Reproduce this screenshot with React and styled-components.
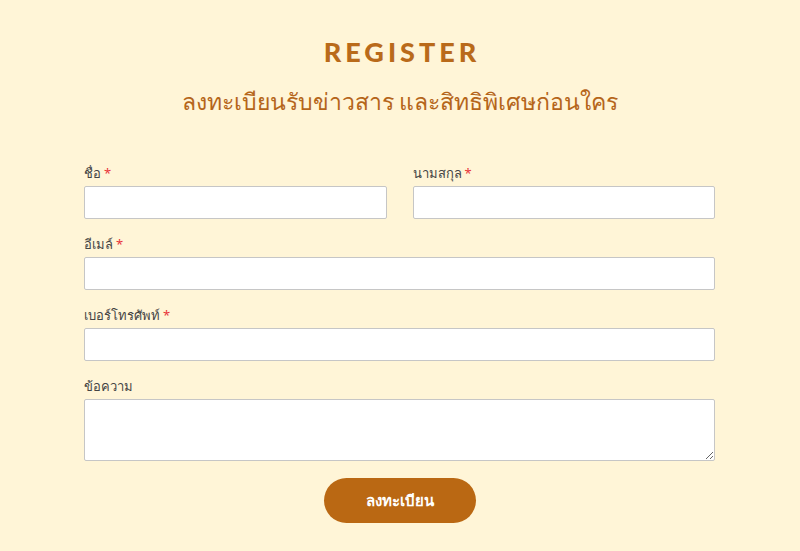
import styled, { createGlobalStyle } from "styled-components";

const GlobalStyle = createGlobalStyle`
  html, body {
    margin: 0;
    padding: 0;
    background: #fff5d7;
  }
  body {
    font-family: "Noto Sans", "DejaVu Sans", sans-serif;
  }
`

const StPage = styled.div`
  box-sizing: border-box;
  width: 800px;
  height: 551px;
  background: #fff5d7;
  padding-top: 38px;
  overflow: hidden;
`

const StTitle = styled.h1`
  margin: 0;
  text-align: center;
  font-family: "Lato", "Open Sans", sans-serif;
  font-weight: 900;
  font-size: 27px;
  letter-spacing: 4px;
  padding-left: 4px;
  color: #b96a1a;
  line-height: 28px;
`

const StSubtitle = styled.h2`
  margin: 19px 0 0;
  text-align: center;
  font-weight: 400;
  font-size: 23px;
  line-height: 32px;
  color: #b5651a;
`

const StForm = styled.form`
  width: 631px;
  margin: 47px 0 0 84px;
  display: flex;
  flex-direction: column;
  gap: 16px;
`

const StRow = styled.div`
  display: grid;
  grid-template-columns: ${(p) => (p.$split ? "1fr 1fr" : "1fr")};
  column-gap: 26px;
`

const StField = styled.label`
  display: flex;
  flex-direction: column;
  gap: 4px;
`

const StLabel = styled.span`
  font-size: 13px;
  line-height: 18px;
  color: #444;

  em {
    font-style: normal;
    color: #e8343a;
    margin-left: 3px;
  }
`

const StInput = styled.input`
  box-sizing: border-box;
  width: 100%;
  height: 33px;
  border: 1px solid #c6c6c6;
  border-radius: 2px;
  background: #fff;
  font-size: 14px;
  padding: 0 8px;
  outline: none;
`

const StTextarea = styled.textarea`
  box-sizing: border-box;
  width: 100%;
  height: 62px;
  border: 1px solid #c6c6c6;
  border-radius: 2px;
  background: #fff;
  font-size: 14px;
  padding: 6px 8px;
  outline: none;
  display: block;
`

const StButton = styled.button`
  align-self: center;
  margin-top: 1px;
  width: 152px;
  height: 45px;
  border: none;
  border-radius: 23px;
  background: #ba6813;
  color: #fff;
  font-family: "Noto Sans", "DejaVu Sans", sans-serif;
  font-weight: 700;
  font-size: 15px;
  cursor: pointer;
`

function Field({ label, required, children }) {
  return (
    <StField>
      <StLabel>
        {label}
        {required && <em>*</em>}
      </StLabel>
      {children}
    </StField>
  );
}

export default function App() {
  return (
    <>
      <GlobalStyle />
      <StPage>
        <StTitle>REGISTER</StTitle>
        <StSubtitle>ลงทะเบียนรับข่าวสาร และสิทธิพิเศษก่อนใคร</StSubtitle>
        <StForm onSubmit={(e) => e.preventDefault()}>
          <StRow $split>
            <Field label="ชื่อ" required>
              <StInput type="text" />
            </Field>
            <Field label="นามสกุล" required>
              <StInput type="text" />
            </Field>
          </StRow>
          <StRow>
            <Field label="อีเมล์" required>
              <StInput type="email" />
            </Field>
          </StRow>
          <StRow>
            <Field label="เบอร์โทรศัพท์" required>
              <StInput type="tel" />
            </Field>
          </StRow>
          <StRow>
            <Field label="ข้อความ">
              <StTextarea />
            </Field>
          </StRow>
          <StButton type="submit">ลงทะเบียน</StButton>
        </StForm>
      </StPage>
    </>
  );
}
